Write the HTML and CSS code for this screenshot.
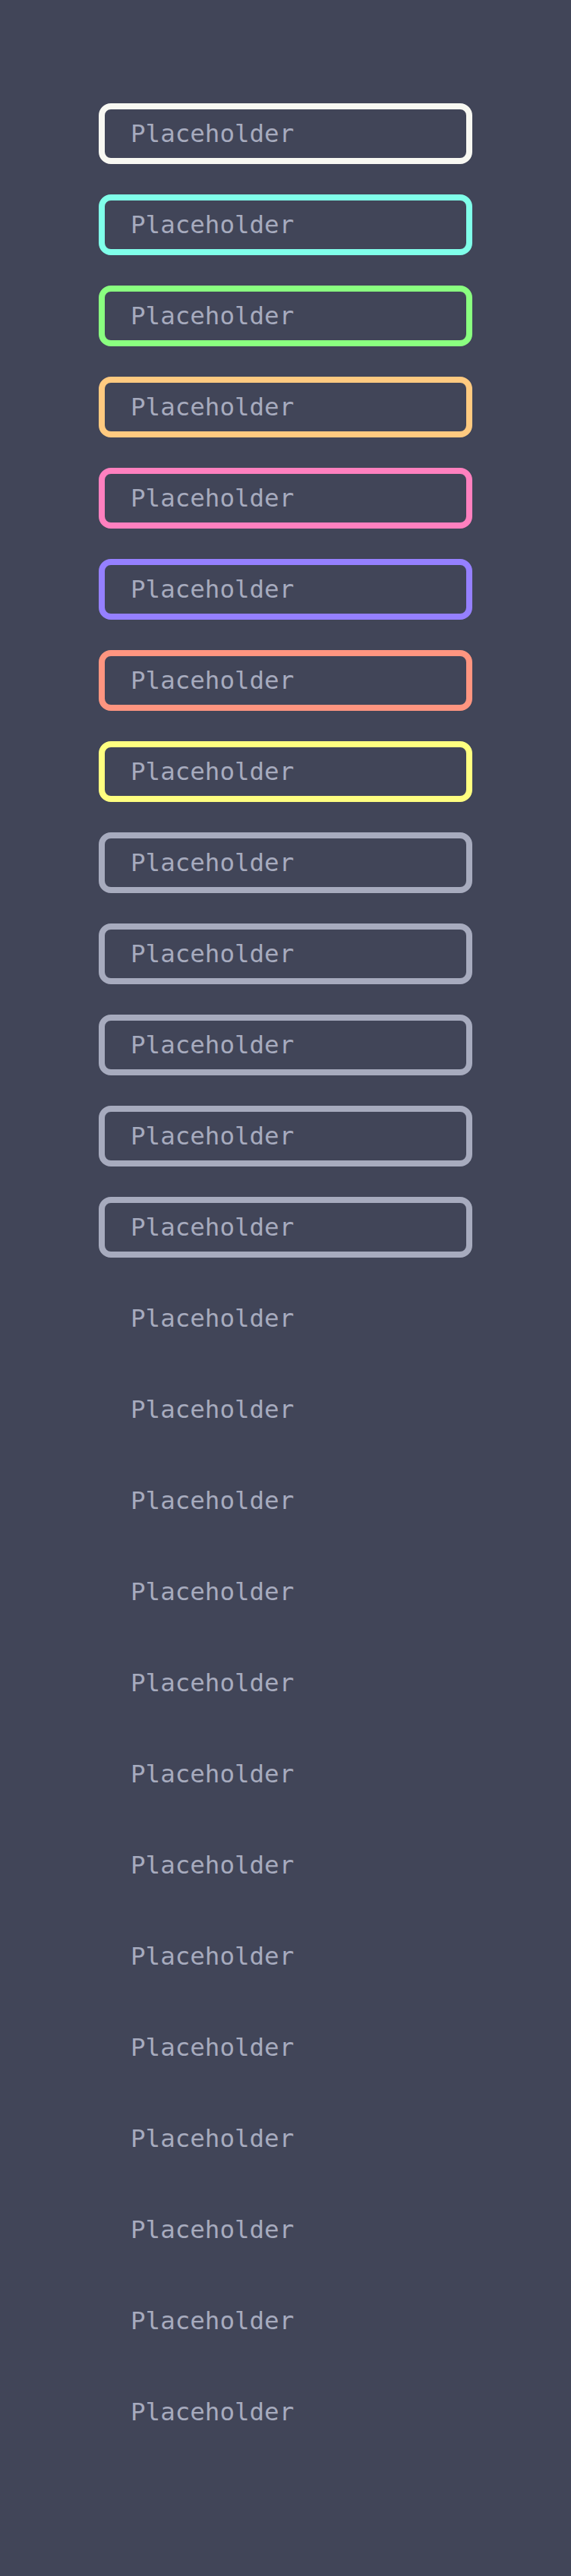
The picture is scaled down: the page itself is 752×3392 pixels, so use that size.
FILE: index.html
```html
<!DOCTYPE html>
<html>
<head>
<meta charset="utf-8">
<link rel="stylesheet" href="styles.css">
</head>
<body>
<div class="stack">
  <input class="field b-white" placeholder="Placeholder">
  <input class="field b-cyan" placeholder="Placeholder">
  <input class="field b-green" placeholder="Placeholder">
  <input class="field b-orange" placeholder="Placeholder">
  <input class="field b-pink" placeholder="Placeholder">
  <input class="field b-purple" placeholder="Placeholder">
  <input class="field b-red" placeholder="Placeholder">
  <input class="field b-yellow" placeholder="Placeholder">
  <input class="field b-gray" placeholder="Placeholder">
  <input class="field b-gray" placeholder="Placeholder">
  <input class="field b-gray" placeholder="Placeholder">
  <input class="field b-gray" placeholder="Placeholder">
  <input class="field b-gray" placeholder="Placeholder">
  <input class="field b-none" placeholder="Placeholder">
  <input class="field b-none" placeholder="Placeholder">
  <input class="field b-none" placeholder="Placeholder">
  <input class="field b-none" placeholder="Placeholder">
  <input class="field b-none" placeholder="Placeholder">
  <input class="field b-none" placeholder="Placeholder">
  <input class="field b-none" placeholder="Placeholder">
  <input class="field b-none" placeholder="Placeholder">
  <input class="field b-none" placeholder="Placeholder">
  <input class="field b-none" placeholder="Placeholder">
  <input class="field b-none" placeholder="Placeholder">
  <input class="field b-none" placeholder="Placeholder">
  <input class="field b-none" placeholder="Placeholder">
</div>
</body>
</html>
```
FILE: styles.css
```css
html, body {
  margin: 0;
  padding: 0;
  background: #414558;
}
body {
  min-height: 3392px;
}
.stack {
  display: flex;
  flex-direction: column;
  gap: 40px;
  padding: 136px 0 0 130px;
}
.field {
  box-sizing: border-box;
  width: 492px;
  height: 80px;
  margin: 0;
  padding: 0 32px 0 34px;
  border: 8px solid transparent;
  border-radius: 16px;
  background: transparent;
  outline: none;
  font-family: "DejaVu Sans Mono", "Liberation Mono", monospace;
  font-size: 32.5px;
  color: #a7abbe;
}
.field::placeholder {
  color: #a7abbe;
  opacity: 1;
}
.b-white { border-color: #f8f8f2; }
.b-cyan { border-color: #80ffea; }
.b-green { border-color: #8aff80; }
.b-orange { border-color: #ffca80; }
.b-pink { border-color: #ff80bf; }
.b-purple { border-color: #9580ff; }
.b-red { border-color: #ff9580; }
.b-yellow { border-color: #ffff80; }
.b-gray { border-color: #a7abbe; }
.b-none { border-color: transparent; }
```
